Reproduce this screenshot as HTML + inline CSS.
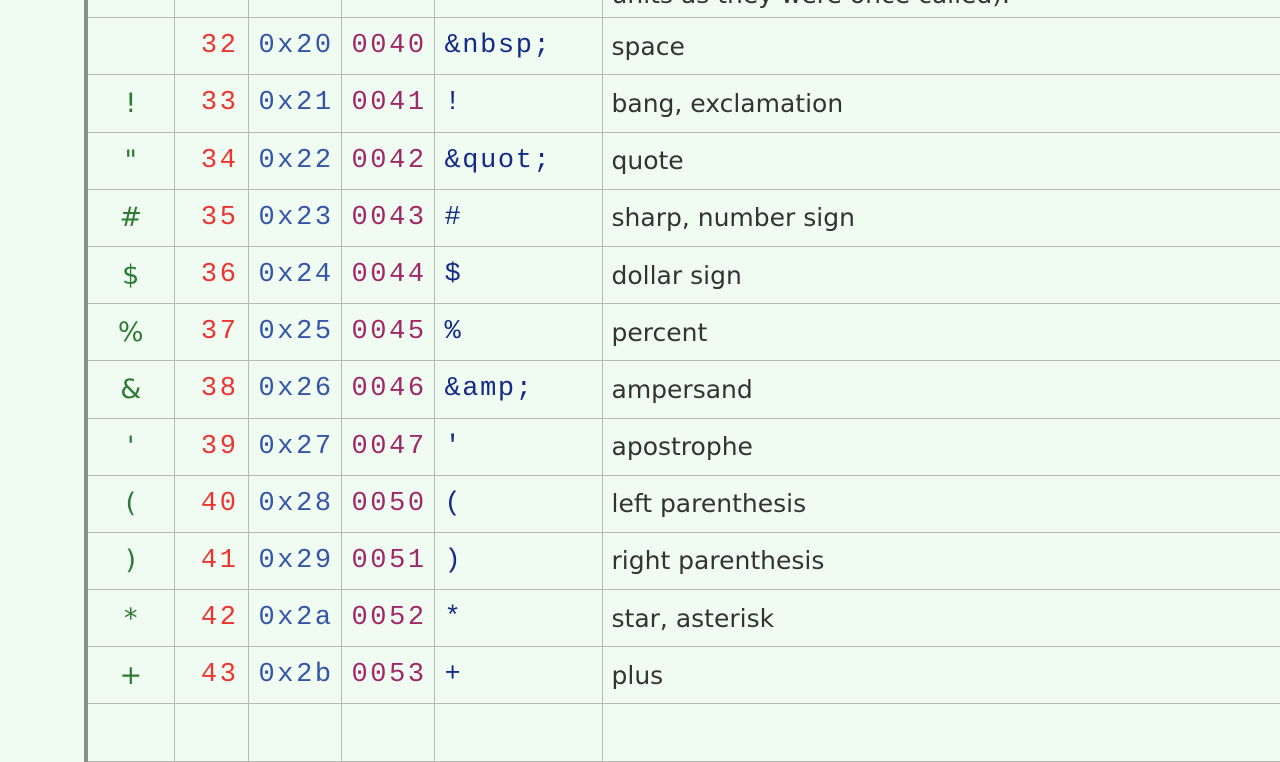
<!DOCTYPE html>
<html><head><style>
html,body{margin:0;padding:0;width:1280px;height:720px;overflow:hidden;background:#f0fcf2}
table{position:absolute;left:84px;top:-40px;border-collapse:collapse;border-left:4px solid #8a8f8a;table-layout:fixed;width:1300px}
td{height:57.2px;border:1px solid #b4bcb4;padding:0;vertical-align:middle;box-sizing:border-box;white-space:nowrap}
td.c{text-align:center;color:#2e7a34;font:27px "DejaVu Sans","Liberation Sans",sans-serif}
td.d{text-align:right;padding-right:9px;color:#ee3333;font:27px "Liberation Mono",monospace;letter-spacing:2.6px}
td.h{padding-left:10px;color:#3555a8;font:27px "Liberation Mono",monospace;letter-spacing:2.6px}
td.o{padding-left:10px;color:#a02868;font:27px "Liberation Mono",monospace;letter-spacing:2.6px}
td.e{padding-left:10px;color:#142a88;font:27px "Liberation Mono",monospace;letter-spacing:1.6px}
td.t{padding-left:9px;color:#333;font:25px "DejaVu Sans","Liberation Sans",sans-serif;border-right:none}
</style></head><body>
<table>
<colgroup><col style="width:88px"><col style="width:74px"><col style="width:93px"><col style="width:93px"><col style="width:168px"><col style="width:784px"></colgroup>
<tr><td class="c"></td><td class="d"></td><td class="h"></td><td class="o"></td><td class="e"></td><td class="t" style="vertical-align:bottom;padding-bottom:8px">units as they were once called).</td></tr>
<tr><td class="c"></td><td class="d">32</td><td class="h">0x20</td><td class="o">0040</td><td class="e">&amp;nbsp;</td><td class="t">space</td></tr>
<tr><td class="c">!</td><td class="d">33</td><td class="h">0x21</td><td class="o">0041</td><td class="e">!</td><td class="t">bang, exclamation</td></tr>
<tr><td class="c">"</td><td class="d">34</td><td class="h">0x22</td><td class="o">0042</td><td class="e">&amp;quot;</td><td class="t">quote</td></tr>
<tr><td class="c">#</td><td class="d">35</td><td class="h">0x23</td><td class="o">0043</td><td class="e">#</td><td class="t">sharp, number sign</td></tr>
<tr><td class="c">$</td><td class="d">36</td><td class="h">0x24</td><td class="o">0044</td><td class="e">$</td><td class="t">dollar sign</td></tr>
<tr><td class="c">%</td><td class="d">37</td><td class="h">0x25</td><td class="o">0045</td><td class="e">%</td><td class="t">percent</td></tr>
<tr><td class="c">&amp;</td><td class="d">38</td><td class="h">0x26</td><td class="o">0046</td><td class="e">&amp;amp;</td><td class="t">ampersand</td></tr>
<tr><td class="c">'</td><td class="d">39</td><td class="h">0x27</td><td class="o">0047</td><td class="e">'</td><td class="t">apostrophe</td></tr>
<tr><td class="c">(</td><td class="d">40</td><td class="h">0x28</td><td class="o">0050</td><td class="e">(</td><td class="t">left parenthesis</td></tr>
<tr><td class="c">)</td><td class="d">41</td><td class="h">0x29</td><td class="o">0051</td><td class="e">)</td><td class="t">right parenthesis</td></tr>
<tr><td class="c">*</td><td class="d">42</td><td class="h">0x2a</td><td class="o">0052</td><td class="e">*</td><td class="t">star, asterisk</td></tr>
<tr><td class="c">+</td><td class="d">43</td><td class="h">0x2b</td><td class="o">0053</td><td class="e">+</td><td class="t">plus</td></tr>
<tr><td class="c"></td><td class="d"></td><td class="h"></td><td class="o"></td><td class="e"></td><td class="t"></td></tr>
</table>
</body></html>
